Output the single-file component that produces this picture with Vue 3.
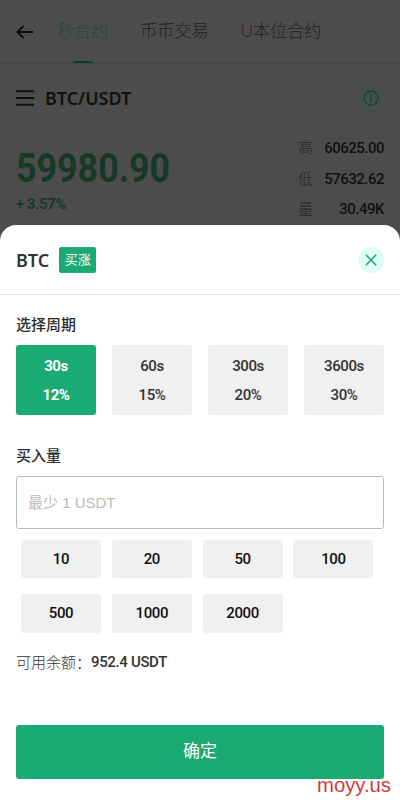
<script setup>
const tabs = [
  { label: '秒合约', active: true },
  { label: '币币交易' },
  { label: 'U本位合约' },
]
const stats = [
  { label: '高', value: '60625.00' },
  { label: '低', value: '57632.62' },
  { label: '量', value: '30.49K' },
]
const periods = [
  { time: '30s', rate: '12%', active: true },
  { time: '60s', rate: '15%' },
  { time: '300s', rate: '20%' },
  { time: '3600s', rate: '30%' },
]
const amounts = [10, 20, 50, 100, 500, 1000, 2000]
</script>

<template>
  <div class="page">
    <header class="nav">
      <svg class="back" width="18" height="14" viewBox="0 0 18 14" fill="none" stroke="#101010" stroke-width="2">
        <path d="M7.5 1 1.5 7l6 6M2 7h15" />
      </svg>
      <nav class="tabs">
        <span v-for="t in tabs" :key="t.label" class="tab" :class="{ active: t.active }">{{ t.label }}</span>
      </nav>
    </header>
    <section class="market">
      <div class="pair">
        <svg width="18" height="16" viewBox="0 0 18 16" stroke="#111" stroke-width="2">
          <path d="M0 1.2h18M0 8h18M0 14.8h18" />
        </svg>
        <b>BTC/USDT</b>
        <span class="round info">
          <svg width="16" height="16" viewBox="0 0 16 16" fill="none" stroke="#1b4235" stroke-width="1.4">
            <circle cx="8" cy="8" r="7" />
            <path d="M8 7v5M8 4v1.7" stroke-width="1.7" />
          </svg>
        </span>
      </div>
      <div class="quote">
        <div>
          <div class="price">59980.90</div>
          <div class="change"><i>+</i>3.57%</div>
        </div>
        <div class="stats">
          <div v-for="s in stats" :key="s.label" class="stat">
            <span>{{ s.label }}</span><b>{{ s.value }}</b>
          </div>
        </div>
      </div>
    </section>

    <section class="sheet">
      <div class="head">
        <b>BTC</b>
        <span class="tag">买涨</span>
        <span class="round close">
          <svg width="12" height="12" viewBox="0 0 12 12" stroke="#209b6c" stroke-width="1.4">
            <path d="M.8.8l10.4 10.4M11.2.8.8 11.2" />
          </svg>
        </span>
      </div>
      <div class="body">
        <h3>选择周期</h3>
        <div class="periods">
          <div v-for="p in periods" :key="p.time" class="period" :class="{ active: p.active }">
            <span>{{ p.time }}</span><span>{{ p.rate }}</span>
          </div>
        </div>
        <h3 class="second">买入量</h3>
        <div class="field">最少 1 USDT</div>
        <div class="amounts">
          <div v-for="a in amounts" :key="a" class="amount">{{ a }}</div>
        </div>
        <div class="balance"><span>可用余额：</span><b>952.4 USDT</b></div>
        <div class="submit">确定</div>
      </div>
    </section>
    <div class="mark">moyy.us</div>
  </div>
</template>

<style>
body { background: #4c4c4c; }
</style>

<style scoped>
* { box-sizing: border-box; }
.page {
  position: relative;
  width: 400px;
  height: 800px;
  overflow: hidden;
  background: #4c4c4c;
  font-family: "Noto Sans", "Noto Sans CJK SC", sans-serif;
}
.nav {
  display: flex;
  height: 64px;
  padding-left: 16px;
  border-bottom: 1px solid #444646;
}
.back { margin-top: 25px; flex: none; }
.tabs { display: flex; gap: 32px; margin-left: 23px; }
.tab {
  position: relative;
  height: 63px;
  line-height: 61px;
  font-family: "Open Sans", "Noto Sans CJK SC", sans-serif;
  font-size: 17.1px;
  font-weight: 300;
  color: #202125;
  white-space: nowrap;
}
.tab.active { color: #1c4a37; }
.tab.active::after {
  content: "";
  position: absolute;
  left: 16px;
  bottom: 0;
  width: 20px;
  height: 2px;
  border-radius: 1px;
  background: #0d3b2a;
}
.market { padding: 0 16px; }
.pair { display: flex; align-items: center; height: 68px; color: #111; }
.pair b { margin-left: 11px; font-size: 18px; font-weight: 600; letter-spacing: -.05px; }
.round {
  display: flex;
  align-items: center;
  justify-content: center;
  width: 26px;
  height: 26px;
  margin-left: auto;
  border-radius: 50%;
}
.info { background: #435049; }
.quote { display: flex; justify-content: space-between; font-family: Roboto, sans-serif; }
.price {
  margin-top: 13px;
  line-height: 48px;
  font-size: 40px;
  font-weight: 700;
  color: #163927;
  transform: scaleX(.895);
  transform-origin: left;
}
.change {
  margin-top: 1px;
  line-height: 20px;
  font-size: 15px;
  font-weight: 700;
  letter-spacing: -.35px;
  color: #163927;
}
.change i { font-style: normal; margin-right: 3px; }
.stats { width: 86px; }
.stat {
  display: flex;
  justify-content: space-between;
  height: 30.6px;
  line-height: 32px;
  font-size: 15px;
  color: #111;
}
.stat span { font-family: "Noto Sans CJK SC", sans-serif; font-weight: 300; line-height: 30px; color: #25262a; }
.stat b { font-weight: 500; letter-spacing: -.5px; }
.sheet {
  position: absolute;
  left: 0;
  right: 0;
  bottom: 0;
  height: 575px;
  border-radius: 16px 16px 0 0;
  background: #fff;
  color: #333;
}
.head {
  display: flex;
  align-items: center;
  height: 70px;
  padding: 0 16px;
  border-bottom: 1px solid #e5e5e5;
}
.head b { font-size: 18px; font-weight: 600; line-height: 26px; padding-top: 1px; }
.tag {
  width: 37px;
  height: 26px;
  margin-left: 10px;
  border-radius: 2px;
  line-height: 25px;
  text-align: center;
  font-size: 13px;
  color: #fff;
  background: #1aab74;
}
.close { background: #defff3; }
.body { padding: 18px 16px 0; }
h3 { margin: 0; line-height: 22px; font-size: 15px; font-weight: 500; color: #2b2b2b; }
.periods { display: flex; gap: 16px; margin-top: 10px; }
.period {
  display: flex;
  flex-direction: column;
  align-items: center;
  width: 80px;
  height: 70px;
  padding-top: 7px;
  border-radius: 3px;
  background: #f0f0f0;
  font: 500 15px/29px Roboto, sans-serif;
  letter-spacing: -.4px;
}
.period.active { background: #1aab74; color: #fff; font-weight: 700; }
.second { margin-top: 29px; }
.field {
  height: 53px;
  margin-top: 10px;
  padding-left: 11px;
  border: 1px solid #b9b9b9;
  border-radius: 3px;
  line-height: 51px;
  font-family: "Liberation Sans", "Noto Sans CJK SC", sans-serif;
  font-size: 15px;
  color: #bbb;
}
.amounts { display: flex; flex-wrap: wrap; gap: 16px 10.8px; padding: 11px 0 0 5px; }
.amount {
  width: 80px;
  height: 38.4px;
  border-radius: 3px;
  text-align: center;
  font: 500 15px/39px Roboto, sans-serif;
  letter-spacing: -.4px;
  color: #111;
  background: #f0f0f0;
}
.balance { margin-top: 18.2px; line-height: 22px; display: flex; font-size: 15px; }
.balance span { font-family: "Noto Sans CJK SC", sans-serif; font-weight: 300; }
.balance b { font-family: Roboto, sans-serif; font-weight: 500; letter-spacing: -.35px; }
.submit {
  height: 54px;
  margin-top: 52px;
  border-radius: 3px;
  line-height: 52px;
  text-align: center;
  font-size: 17px;
  color: #fff;
  background: #1aab74;
}
.mark {
  position: absolute;
  right: 9px;
  bottom: 4px;
  line-height: 22px;
  font-family: "Liberation Sans", sans-serif;
  font-size: 20.3px;
  color: #d13c3c;
}
</style>
